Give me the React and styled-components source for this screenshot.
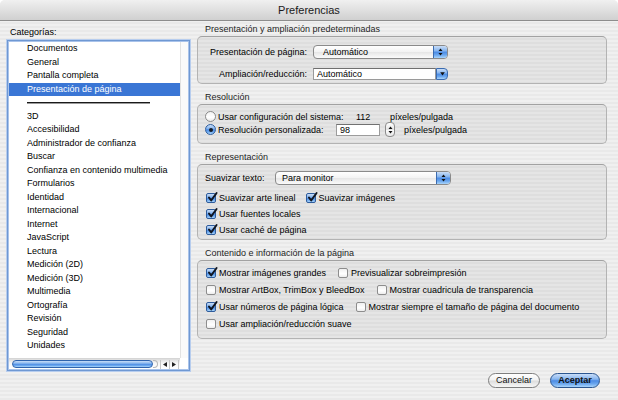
import React from 'react';
import styled, { createGlobalStyle } from 'styled-components';

const GlobalStyle = createGlobalStyle`
  html, body { margin: 0; padding: 0; background: #fff; }
  body { font-family: 'Liberation Sans', Arial, sans-serif; }
`;

const topItems = ['Documentos', 'General', 'Pantalla completa', 'Presentación de página'];
const bottomItems = [
  '3D', 'Accesibilidad', 'Administrador de confianza', 'Buscar',
  'Confianza en contenido multimedia', 'Formularios', 'Identidad', 'Internacional',
  'Internet', 'JavaScript', 'Lectura', 'Medición (2D)', 'Medición (3D)', 'Multimedia',
  'Ortografía', 'Revisión', 'Seguridad', 'Unidades',
];

const aquaBlue = `linear-gradient(to bottom, #c9ddf7 0%, #86b5ef 40%, #4d8ce4 52%, #6aa6ee 75%, #a9d5fb 100%)`;

const Window = styled.div`
  width: 618px;
  height: 400px;
  display: flex;
  flex-direction: column;
  overflow: hidden;
  border-radius: 5px 5px 0 0;
  background: repeating-linear-gradient(to bottom, #f0f0f0 0 2px, #e9e9e9 2px 4px);
  font-size: 9px;
  color: #000;
`;

const TitleBar = styled.div`
  height: 20px;
  flex-shrink: 0;
  display: flex;
  align-items: center;
  justify-content: center;
  background: linear-gradient(to bottom, #f0f0f0 0%, #e0e0e0 50%, #d0d0d0 100%);
  border-bottom: 1px solid #8d8d8d;
  font-size: 11px;
  color: #1a1a1a;
`;

const Body = styled.div`
  flex: 1;
  display: flex;
  padding-left: 7px;
  gap: 7px;
`;

const LeftColumn = styled.div`
  width: 183px;
  display: flex;
  flex-direction: column;
`;

const ListLabel = styled.div`
  margin-top: 6px;
  padding-left: 3px;
  line-height: 11px;
`;

const ListBox = styled.div`
  margin-top: 2px;
  height: 331px;
  box-sizing: border-box;
  border: 1px solid #6f98d3;
  box-shadow: 0 0 0 1px #b7cdee, inset 0 0 0 1px #a9c3ea;
  background: #fff;
  display: flex;
  flex-direction: column;
  padding: 1px;
`;

const ListMain = styled.div`
  flex: 1;
  display: flex;
  min-height: 0;
`;

const Items = styled.div`
  flex: 1;
  display: flex;
  flex-direction: column;
  overflow: hidden;
`;

const VStrip = styled.div`
  width: 7px;
  border-left: 1px solid #e2e2e2;
  background: #fafafa;
`;

const Item = styled.div`
  height: 13.5px;
  line-height: 13.5px;
  padding-left: 18px;
  white-space: nowrap;
  background: ${(p) => (p.$selected ? '#3a76d5' : 'transparent')};
  color: ${(p) => (p.$selected ? '#fff' : '#000')};
`;

const Separator = styled.div`
  height: 13.5px;
  display: flex;
  align-items: center;
  padding-left: 18px;
  &::after {
    content: '';
    width: 123px;
    height: 1px;
    background: #1a1a1a;
    box-shadow: 0 1px 0 #9a9a9a;
  }
`;

const HScroll = styled.div`
  height: 10px;
  display: flex;
  align-items: center;
  background: linear-gradient(to bottom, #dcdcdc, #f6f6f6 40%, #fff);
  border-top: 1px solid #d6d6d6;
  margin-right: 8px;
`;

const Thumb = styled.div`
  margin-left: 3px;
  width: 141px;
  height: 8px;
  border-radius: 4px;
  box-sizing: border-box;
  border: 1px solid #2f63ad;
  background: ${aquaBlue};
`;

const TrackEnd = styled.div`
  width: 5px;
  height: 8px;
  border-radius: 0 4px 4px 0;
  border: 1px solid #b8b8b8;
  border-left: none;
  box-sizing: border-box;
`;

const Arrows = styled.div`
  margin-left: 2px;
  display: flex;
  height: 9px;
  border-left: 1px solid #c8c8c8;
  & > span {
    width: 8px;
    display: flex;
    align-items: center;
    justify-content: center;
    border-right: 1px solid #c8c8c8;
  }
`;

const RightColumn = styled.div`
  flex: 1;
  display: flex;
  flex-direction: column;
  padding: 3px 11px 0 0;
  gap: 8px;
`;

const Section = styled.div`
  display: flex;
  flex-direction: column;
`;

const SectionTitle = styled.div`
  height: 12px;
  line-height: 11px;
  padding-left: 8px;
  color: #1e1e1e;
`;

const GroupBox = styled.div`
  box-sizing: border-box;
  height: ${(p) => p.$h}px;
  border: 1px solid #b3b3b3;
  border-top-color: #a2a2a2;
  border-radius: 5px;
  background: rgba(0, 0, 0, 0.045);
  padding: ${(p) => p.$pad};
  display: flex;
  flex-direction: column;
  gap: ${(p) => p.$gap || 0}px;
`;

const FormRow = styled.div`
  display: flex;
  align-items: center;
  height: ${(p) => p.$h || 14}px;
  white-space: nowrap;
`;

const FieldLabel = styled.span`
  width: ${(p) => p.$w}px;
  text-align: ${(p) => p.$align || 'left'};
  margin-right: ${(p) => p.$mr || 0}px;
  flex-shrink: 0;
`;

const Popup = styled.div`
  width: ${(p) => p.$w}px;
  height: 14px;
  box-sizing: border-box;
  display: flex;
  border: 1px solid #8a8a8a;
  border-radius: 4px;
  overflow: hidden;
  background: linear-gradient(to bottom, #ffffff 0%, #f3f3f3 48%, #e6e6e6 52%, #fbfbfb 100%);
`;

const PopupText = styled.span`
  flex: 1;
  padding-left: ${(p) => p.$pl || 9}px;
  line-height: 12px;
`;

const Cap = styled.span`
  width: 13px;
  display: flex;
  align-items: center;
  justify-content: center;
  background: ${aquaBlue};
  border-left: 1px solid #3a6bb0;
`;

const Combo = styled.div`
  width: 135px;
  height: 12px;
  display: flex;
`;

const ComboField = styled.span`
  flex: 1;
  box-sizing: border-box;
  border: 1px solid #9a9a9a;
  border-top-color: #6f6f6f;
  background: #fff;
  line-height: 10px;
  padding-left: 3px;
`;

const ComboButton = styled.span`
  width: 12px;
  box-sizing: border-box;
  border: 1px solid #3a6bb0;
  border-radius: 0 4px 4px 0;
  background: ${aquaBlue};
  display: flex;
  align-items: center;
  justify-content: center;
`;

const Radio = styled.span`
  width: 11px;
  height: 11px;
  box-sizing: border-box;
  border-radius: 50%;
  flex-shrink: 0;
  margin-right: 2px;
  display: flex;
  align-items: center;
  justify-content: center;
  border: 1px solid ${(p) => (p.$on ? '#2f5f9f' : '#8a8a8a')};
  background: ${(p) => (p.$on ? aquaBlue : 'linear-gradient(to bottom, #f2f2f2, #ffffff 60%, #e8e8e8)')};
  &::after {
    content: '';
    display: ${(p) => (p.$on ? 'block' : 'none')};
    width: 4px;
    height: 4px;
    border-radius: 50%;
    background: #151a24;
  }
`;

const TextField = styled.span`
  width: 44px;
  height: 12px;
  box-sizing: border-box;
  border: 1px solid #9c9c9c;
  border-top-color: #717171;
  background: #fff;
  line-height: 10px;
  padding-left: 3px;
  flex-shrink: 0;
`;

const Stepper = styled.span`
  width: 10px;
  height: 15px;
  box-sizing: border-box;
  margin: 0 9px 0 5px;
  border: 1px solid #8c8c8c;
  border-radius: 4px;
  background: linear-gradient(to bottom, #fff, #e6e6e6 50%, #fff 51%, #e6e6e6);
  display: flex;
  align-items: center;
  justify-content: center;
  flex-shrink: 0;
`;

const CheckItem = styled.span`
  display: flex;
  align-items: center;
  margin-right: ${(p) => p.$mr || 0}px;
`;

const Box = styled.span`
  position: relative;
  width: 10px;
  height: 10px;
  box-sizing: border-box;
  border-radius: 2px;
  margin-right: 3px;
  flex-shrink: 0;
  border: 1px solid ${(p) => (p.$on ? '#2e5c9c' : '#8d8d8d')};
  background: ${(p) => (p.$on ? aquaBlue : 'linear-gradient(to bottom, #f0f0f0, #ffffff 60%, #ececec)')};
  & > svg {
    position: absolute;
    left: 0;
    top: -2px;
  }
`;

const CheckRows = styled.div`
  display: flex;
  flex-direction: column;
  gap: ${(p) => p.$gap}px;
  margin-top: ${(p) => p.$mt || 0}px;
  padding-left: ${(p) => p.$pl || 0}px;
`;

const Footer = styled.div`
  margin-top: auto;
  display: flex;
  justify-content: flex-end;
  gap: 10px;
  padding: 0 7px 12px 0;
`;

const AquaButton = styled.button`
  font-family: inherit;
  font-size: 9px;
  width: ${(p) => p.$w}px;
  height: 15px;
  padding: 0;
  border-radius: 8px;
  border: 1px solid ${(p) => (p.$primary ? '#2b5690' : '#7e7e7e')};
  background: ${(p) =>
    p.$primary
      ? aquaBlue
      : 'linear-gradient(to bottom, #ffffff 0%, #f2f2f2 45%, #dedede 55%, #f7f7f7 100%)'};
  color: #111;
  font-weight: ${(p) => (p.$primary ? 'bold' : 'normal')};
  line-height: 13px;
`;

const UpDown = () => (
  <svg width="5" height="8" viewBox="0 0 5 8">
    <path d="M2.5 0.5L4.5 3H0.5z M2.5 7.5L0.5 5h4z" fill="#111" />
  </svg>
);

const Down = () => (
  <svg width="5" height="4" viewBox="0 0 5 4">
    <path d="M0.2 0.3h4.6L2.5 3.6z" fill="#111" />
  </svg>
);

const Tick = () => (
  <svg width="11" height="11" viewBox="0 0 11 11" overflow="visible">
    <path d="M2 5.6L4.2 8.4L9.6 1" stroke="#10151f" strokeWidth="1.9" fill="none" strokeLinecap="round" strokeLinejoin="round" />
  </svg>
);

const Tri = ({ dir }) => (
  <svg width="4" height="5" viewBox="0 0 4 5">
    <path d={dir === 'left' ? 'M0 2.5L4 0V5z' : 'M4 2.5L0 0V5z'} fill="#222" />
  </svg>
);

function Check({ on, children, mr }) {
  return (
    <CheckItem $mr={mr}>
      <Box $on={on}>{on && <Tick />}</Box>
      {children}
    </CheckItem>
  );
}

export default function App() {
  return (
    <>
      <GlobalStyle />
      <Window>
        <TitleBar>Preferencias</TitleBar>
        <Body>
          <LeftColumn>
            <ListLabel>Categorías:</ListLabel>
            <ListBox>
              <ListMain>
                <Items>
                  {topItems.map((it) => (
                    <Item key={it} $selected={it === 'Presentación de página'}>{it}</Item>
                  ))}
                  <Separator />
                  {bottomItems.map((it) => (
                    <Item key={it}>{it}</Item>
                  ))}
                </Items>
                <VStrip />
              </ListMain>
              <HScroll>
                <Thumb />
                <TrackEnd />
                <Arrows>
                  <span><Tri dir="left" /></span>
                  <span><Tri dir="right" /></span>
                </Arrows>
              </HScroll>
            </ListBox>
          </LeftColumn>

          <RightColumn>
            <Section>
              <SectionTitle>Presentación y ampliación predeterminadas</SectionTitle>
              <GroupBox $h={48} $pad="8px 0 0 0" $gap={8}>
                <FormRow>
                  <FieldLabel $w={109} $align="right" $mr={6}>Presentación de página:</FieldLabel>
                  <Popup $w={135}>
                    <PopupText>Automático</PopupText>
                    <Cap><UpDown /></Cap>
                  </Popup>
                </FormRow>
                <FormRow>
                  <FieldLabel $w={109} $align="right" $mr={6}>Ampliación/reducción:</FieldLabel>
                  <Combo>
                    <ComboField>Automático</ComboField>
                    <ComboButton><Down /></ComboButton>
                  </Combo>
                </FormRow>
              </GroupBox>
            </Section>

            <Section>
              <SectionTitle>Resolución</SectionTitle>
              <GroupBox $h={40} $pad="5px 0 0 7px">
                <FormRow $h={13}>
                  <Radio />
                  <FieldLabel $w={138}>Usar configuración del sistema:</FieldLabel>
                  <FieldLabel $w={34}>112</FieldLabel>
                  <span>píxeles/pulgada</span>
                </FormRow>
                <FormRow $h={13}>
                  <Radio $on />
                  <FieldLabel $w={118}>Resolución personalizada:</FieldLabel>
                  <TextField>98</TextField>
                  <Stepper><UpDown /></Stepper>
                  <span>píxeles/pulgada</span>
                </FormRow>
              </GroupBox>
            </Section>

            <Section>
              <SectionTitle>Representación</SectionTitle>
              <GroupBox $h={76} $pad="6px 0 0 7px">
                <FormRow>
                  <FieldLabel $w={70}>Suavizar texto:</FieldLabel>
                  <Popup $w={176}>
                    <PopupText $pl={6}>Para monitor</PopupText>
                    <Cap><UpDown /></Cap>
                  </Popup>
                </FormRow>
                <CheckRows $gap={2} $mt={6} $pl={1}>
                  <FormRow>
                    <Check on mr={10}>Suavizar arte lineal</Check>
                    <Check on>Suavizar imágenes</Check>
                  </FormRow>
                  <FormRow>
                    <Check on>Usar fuentes locales</Check>
                  </FormRow>
                  <FormRow>
                    <Check on>Usar caché de página</Check>
                  </FormRow>
                </CheckRows>
              </GroupBox>
            </Section>

            <Section>
              <SectionTitle>Contenido e información de la página</SectionTitle>
              <GroupBox $h={79} $pad="5px 0 0 8px">
                <CheckRows $gap={3}>
                  <FormRow>
                    <Check on mr={12}>Mostrar imágenes grandes</Check>
                    <Check>Previsualizar sobreimpresión</Check>
                  </FormRow>
                  <FormRow>
                    <Check mr={12}>Mostrar ArtBox, TrimBox y BleedBox</Check>
                    <Check>Mostrar cuadricula de transparencia</Check>
                  </FormRow>
                  <FormRow>
                    <Check on mr={12}>Usar números de página lógica</Check>
                    <Check>Mostrar siempre el tamaño de página del documento</Check>
                  </FormRow>
                  <FormRow>
                    <Check>Usar ampliación/reducción suave</Check>
                  </FormRow>
                </CheckRows>
              </GroupBox>
            </Section>

            <Footer>
              <AquaButton $w={52}>Cancelar</AquaButton>
              <AquaButton $w={50} $primary>Aceptar</AquaButton>
            </Footer>
          </RightColumn>
        </Body>
      </Window>
    </>
  );
}
